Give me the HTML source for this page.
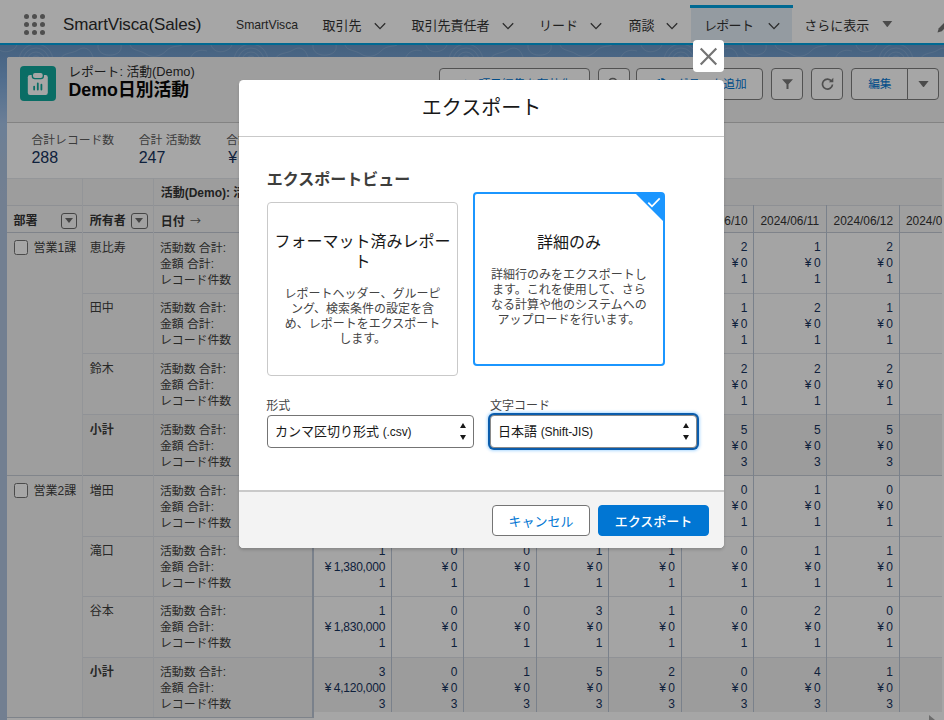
<!DOCTYPE html>
<html lang="ja">
<head>
<meta charset="utf-8">
<title>Demo日別活動 | Salesforce</title>
<style>
*{box-sizing:border-box;margin:0;padding:0}
html,body{width:944px;height:720px;overflow:hidden}
body{position:relative;font-family:"Liberation Sans","Noto Sans CJK JP",sans-serif;font-size:13px;color:#181818;background:#b0c4df}
.abs{position:absolute}
/* ---------- page background ---------- */
#bg{left:0;top:45px;width:944px;height:675px;background:linear-gradient(180deg,rgb(106,150,196) 0px,rgb(114,157,204) 12px,rgb(126,169,218) 35px,rgb(165,195,232) 79px,rgb(172,195,225) 115px,#b0c4df 160px,#b0c4df 100%)}
#bgpat{left:0;top:45px}
/* ---------- nav ---------- */
#nav{left:0;top:0;width:944px;height:45.1px;background:#fff;border-bottom:2.6px solid #00a1e0}
#nav .t{position:absolute;top:0;height:42px;line-height:51px;font-size:13px;color:#333;white-space:nowrap}
#nav .app{font-size:17px;left:63px;line-height:49px;color:#2b2b2b;letter-spacing:-.12px}
#nav svg.chev{position:absolute;top:22px;width:12px;height:8px;fill:none;stroke:#444;stroke-width:1.3}
#tab{left:691px;top:8px;width:101px;height:34px;background:#e3eef8}
#tabbar{left:690px;top:5px;width:103px;height:3px;background:#00a1e0}
.dots{left:24px;top:14px;width:22px;height:22px}
.dots i{position:absolute;width:5px;height:5px;border-radius:50%;background:#7a7a7a}
/* ---------- page header card ---------- */
#card{left:7.2px;top:57.3px;width:960px;height:680px;background:#fff;border-radius:2.5px 0 0 0;overflow:hidden}
#hdr{left:0;top:0;width:960px;height:65.5px;background:#f3f3f3;border-bottom:1px solid #c9c9c9}
#icon{left:13px;top:8.6px;width:36px;height:35.5px;border-radius:4px;background:#10a89b}
#crumb{left:61px;top:6px;font-size:12.8px;line-height:18px;color:#2b2b2b;white-space:nowrap}
#title{left:61.3px;top:21px;font-size:17.8px;line-height:24px;font-weight:700;color:#080707;white-space:nowrap}
.btn{position:absolute;top:10.7px;height:31.9px;border:1.25px solid #7e7e7e;border-radius:4px;background:#fff;color:#0176d3;font-size:11.7px;line-height:30px;text-align:center;white-space:nowrap}
.btn svg{position:absolute;left:50%;top:50%}
/* summary */
#sum{left:0;top:65.5px;width:960px;height:57px;background:#fff}
#sum .l{position:absolute;top:9.5px;font-size:11.8px;line-height:16px;color:#5c5c5c;white-space:nowrap}
#sum .v{position:absolute;top:25px;font-size:16px;line-height:20px;color:#16325c;white-space:nowrap}
/* ---------- table ---------- */
#tbl{left:0;top:121px;width:960px;height:560px;background:#fcfcfc;font-size:12px;color:#16325c}
.hrow{position:absolute;left:0;width:960px}
.subbg{position:absolute;width:900px}
.lbg{position:absolute;background:#f3f3f3}
.vl{position:absolute;width:1px;background:#e2e5ea}
.vl.dk{width:1.2px;background:#bcc6d6}
.hl{position:absolute;height:1px;background:#dde0e6}
.ht{position:absolute;line-height:16px;color:#333;white-space:nowrap}
.ht.dc{text-align:left;padding-left:6.8px;overflow:hidden;font-size:11.9px}
.ar{font-family:"Noto Sans CJK JP",sans-serif;font-weight:400;font-size:11px;position:relative;top:-.5px;margin-left:2px;color:#5c5c5c}
.gt,.own,.lab{position:absolute;line-height:16px;color:#3e3e3c;white-space:nowrap}
.lab{font-size:11.9px}
.c{position:absolute;font-size:12px;letter-spacing:-.22px;line-height:16px;text-align:right;padding-right:6.4px;white-space:nowrap;color:#16325c}
.y{padding-right:2.6px}
.b{font-weight:700}
.fbtn{position:absolute;width:16.2px;height:16.2px;border:1px solid #6b6b6b;border-radius:3px;background:#f8f8f8}
.fbtn:after{content:"";position:absolute;left:3.1px;top:4.6px;border:4px solid transparent;border-top:5px solid #6b6b6b;border-bottom:0}
.cb{position:absolute;width:14.6px;height:14.6px;border:1px solid #747474;border-radius:2.5px;background:#fff}
.sb{position:absolute;width:960px;height:12px;background:#fff}
.sba{position:absolute;left:921.8px;width:0;height:0;border:5px solid transparent;border-left:6.3px solid #a6a6a6;border-right:0}
.redge{position:absolute;top:0;width:12px;height:560px;background:#fff}
/* ---------- overlay & modal ---------- */
#ov{left:0;top:0;width:944px;height:720px;background:rgba(0,0,0,.35)}
#close{left:692.5px;top:39.8px;width:31.7px;height:32px;background:#fff;border-radius:4px}
#modal{left:238.5px;top:79.6px;width:485.6px;height:468.2px;background:#fff;border-radius:4.5px;overflow:hidden;box-shadow:0 2px 3px rgba(0,0,0,.16)}
#mh{left:0;top:0;width:486px;height:57.7px;border-bottom:1.4px solid #c9c9c9;text-align:center;font-size:20px;line-height:56.6px;color:#181818}
#mf{left:0;top:410.9px;width:486px;height:58px;border-top:2px solid #c9c9c9;background:#f3f3f3}
.opt{position:absolute;width:191.3px;height:173.5px;border:1px solid #c9c9c9;border-radius:4px;background:#fff;text-align:center}
.opt h3{position:absolute;left:0;width:100%;font-size:16px;font-weight:400;line-height:20px;color:#181818}
.opt p{position:absolute;left:0;width:100%;padding:0 16px;font-size:12px;line-height:15px;color:#444}
.mhd{position:absolute;font-size:16px;font-weight:700;line-height:22px;color:#3e3e3c;white-space:nowrap}
.opt.on{border:2px solid #1b96ff;border-radius:4px}
.opt.on h3{margin-left:0}.opt.on p{padding:0 15px}
.tri{position:absolute;right:-1px;top:-1px;width:0;height:0;border-top:29px solid #1b96ff;border-left:29px solid transparent;border-top-right-radius:3px}
.ck{position:absolute;right:1.8px;top:2.6px;width:14px;height:11px}
.mb{position:absolute;top:12.1px;height:31.700px;border:1px solid #747474;border-radius:4px;background:#fff;color:#0176d3;font-size:13px;line-height:31.5px;text-align:center;white-space:nowrap}
.mb.pri{background:#0176d3;border-color:#0176d3;color:#fff;font-weight:500}
.sel.foc{border-color:#8a8a8a;box-shadow:0 0 0 2px #0b5cab,0 0 3px 2.500px rgba(27,150,255,.35)}
.lbl{position:absolute;font-size:12px;line-height:16px;color:#444;white-space:nowrap}
.sel{position:absolute;height:32.6px;width:207px;border:1px solid #747474;border-radius:4px;background:#fff;font-size:13px;line-height:31px;padding-left:7.6px;color:#181818;white-space:nowrap}
.sel span{font-size:12px;letter-spacing:-.1px}
.sel i{position:absolute;right:6.8px;border:3px solid transparent}
.sel i.u{top:7.5px;border-bottom:5.2px solid #181818;border-top:0}
.sel i.d{top:19px;border-top:5.2px solid #181818;border-bottom:0}
</style>
</head>
<body>
<div id="bg" class="abs"></div>
<svg id="bgpat" class="abs" width="944" height="14" viewBox="0 0 944 14">
  <defs><pattern id="topo" x="-6" y="0" width="215" height="14" patternUnits="userSpaceOnUse">
    <g fill="none" stroke="#fff" stroke-opacity=".17" stroke-width=".8">
      <circle cx="42" cy="16" r="5"/><circle cx="42" cy="16" r="9"/><circle cx="42" cy="16" r="13"/><circle cx="42" cy="16" r="17"/>
      <path d="M66 14C70 7 78 9 84 5S96 3 99 12"/>
      <path d="M104 0C103 7 110 11 118 10S128 4 127 0"/>
      <path d="M136 0C138 6 146 5 152 9S166 12 172 6S184 2 188 0"/>
      <path d="M196 14C199 6 206 4 213 6"/>
      <path d="M2 0C4 6 10 8 16 6S22 1 23 0"/>
    </g>
  </pattern></defs>
  <rect width="944" height="14" fill="url(#topo)"/>
</svg>

<!-- NAV -->
<div id="nav" class="abs">
  <div class="abs dots">
    <i style="left:0;top:0"></i><i style="left:8.2px;top:0"></i><i style="left:16.4px;top:0"></i>
    <i style="left:0;top:8.2px"></i><i style="left:8.2px;top:8.2px"></i><i style="left:16.4px;top:8.2px"></i>
    <i style="left:0;top:16.4px"></i><i style="left:8.2px;top:16.4px"></i><i style="left:16.4px;top:16.4px"></i>
  </div>
  <div class="t app">SmartVisca(Sales)</div>
  <div class="t" style="left:236px;font-size:12.2px">SmartVisca</div>
  <div class="t" style="left:322.5px">取引先</div>
  <svg class="chev" style="left:374px" viewBox="0 0 12 8"><path d="M0.8 1.2 L6 6.6 L11.2 1.2"/></svg>
  <div class="t" style="left:411.5px">取引先責任者</div>
  <svg class="chev" style="left:501.5px" viewBox="0 0 12 8"><path d="M0.8 1.2 L6 6.6 L11.2 1.2"/></svg>
  <div class="t" style="left:539px">リード</div>
  <svg class="chev" style="left:590px" viewBox="0 0 12 8"><path d="M0.8 1.2 L6 6.6 L11.2 1.2"/></svg>
  <div class="t" style="left:628.5px">商談</div>
  <svg class="chev" style="left:666px" viewBox="0 0 12 8"><path d="M0.8 1.2 L6 6.6 L11.2 1.2"/></svg>
  <div id="tab" class="abs"></div>
  <div id="tabbar" class="abs"></div>
  <div class="t" style="left:704px;letter-spacing:-.7px">レポート</div>
  <svg class="chev" style="left:768px" viewBox="0 0 12 8"><path d="M0.8 1.2 L6 6.6 L11.2 1.2"/></svg>
  <div class="t" style="left:804.3px">さらに表示</div>
  <svg class="abs" style="left:882.300px;top:20.800px;width:10.600px;height:6.300px" viewBox="0 0 11 7"><path d="M0 0H11L5.500 7Z" fill="#747474"/></svg>
  <svg class="abs" style="left:936.500px;top:18.500px;width:14px;height:14px" viewBox="0 0 14 14"><path d="M0.500 13.500L1.800 9.200L10 1L13 4L4.800 12.200Z" fill="#747474"/></svg>
</div>

<!-- PAGE CARD -->
<div id="card" class="abs">
  <div id="hdr" class="abs">
    <div id="icon" class="abs">
      <svg class="abs" style="left:0;top:0;width:36px;height:35.5px" viewBox="0 0 36 35.5">
        <rect x="7.800" y="9" width="20" height="19.900" rx="2.200" fill="#fff"/>
        <rect x="11.700" y="5.700" width="12.300" height="7.600" rx="3.200" fill="#10a89b"/>
        <rect x="13" y="7" width="9.700" height="5" rx="2" fill="#fff"/>
        <path d="M14.150 20.600V23.600M17.800 17.300V23.600M21.400 18.700V23.600" stroke="#10a89b" stroke-width="1.800" stroke-linecap="round" fill="none"/>
      </svg>
    </div>
    <div id="crumb" class="abs">レポート: 活動(Demo)</div>
    <div id="title" class="abs">Demo日別活動</div>
    <div class="btn" style="left:431.5px;width:151px;padding-left:22px"><svg style="left:17.5px;top:9px;margin:0;width:13px;height:13px" viewBox="0 0 13 13"><path d="M0.500 12.500L1.300 9L8.800 1.500L11.500 4.200L4 11.700Z" fill="#0176d3"/></svg>項目編集を有効化</div>
    <div class="btn" style="left:590.5px;width:32px"><svg style="margin:-7px 0 0 -7px;width:14px;height:14px" viewBox="0 0 14 14"><circle cx="5.800" cy="5.800" r="4.300" fill="none" stroke="#747474" stroke-width="1.600"/><path d="M9 9L13 13" stroke="#747474" stroke-width="1.800"/></svg></div>
    <div class="btn" style="left:629px;width:127px;padding-left:24px"><svg style="left:17px;top:9px;margin:0;width:13px;height:13px" viewBox="0 0 13 13"><path d="M6 1A5.600 5.600 0 1 0 12 7H6Z" fill="#0176d3"/><path d="M7.300 0V5.700H13A5.700 5.700 0 0 0 7.300 0Z" fill="#0176d3"/></svg>グラフを追加</div>
    <div class="btn" style="left:764.3px;width:31.700px"><svg style="margin:-5.200px 0 0 -5.500px;width:11px;height:10.200px" viewBox="0 0 12 11"><path d="M0 0.300H12L7.100 5.800V11H4.900V5.800Z" fill="#7a7a7a"/></svg></div>
    <div class="btn" style="left:804px;width:31.700px"><svg style="margin:-6.500px 0 0 -6.500px;width:13px;height:13px" viewBox="0 0 13 13"><path d="M10.600 4.200A5 5 0 1 0 11.500 7.500" fill="none" stroke="#7a7a7a" stroke-width="1.700"/><path d="M12.300 0.800V5.300H7.800Z" fill="#7a7a7a"/></svg></div>
    <div class="btn" style="left:844.2px;width:57px;border-radius:4px 0 0 4px">編集</div>
    <div class="btn" style="left:900.2px;width:31.500px;border-radius:0 4px 4px 0"><svg style="margin:-3px 0 0 -5.500px;width:11px;height:6.500px" viewBox="0 0 11 7"><path d="M0 0H11L5.500 7Z" fill="#747474"/></svg></div>
  </div>
  <div id="sum" class="abs">
    <div class="l" style="left:24.300px">合計レコード数</div><div class="v" style="left:24.200px">288</div>
    <div class="l" style="left:131.600px">合計 活動数</div><div class="v" style="left:131.500px">247</div>
    <div class="l" style="left:219px">合計 金額</div><div class="v" style="left:221px">¥ 9,130,000</div>
  </div>
  <div id="tbl" class="abs">
    <div class="lbg" style="left:0;top:0;width:305.3px;height:539.6px"></div>
    <div class="hrow" style="top:0;height:26.9px;background:#f1f1f1;border-top:1px solid #e3e6eb"></div>
    <div class="hrow" style="top:26.9px;height:27.3px;left:305.3px;background:#f5f5f5"></div>
    <div class="subbg" style="left:75.4px;top:236.45px;height:60.75px;background:#efefef"></div>
    <div class="subbg" style="left:305.3px;top:236.45px;height:60.75px;background:#f0f0f0"></div>
    <div class="subbg" style="left:75.4px;top:479.45px;height:60.75px;background:#efefef"></div>
    <div class="subbg" style="left:305.3px;top:479.45px;height:60.75px;background:#f0f0f0"></div>
    <div class="ht b" style="left:153.5px;top:7.2px">活動(Demo): 活動日</div>
    <div class="ht b" style="left:6.2px;top:34.3px">部署</div>
    <div class="fbtn" style="left:53.6px;top:34.3px"></div>
    <div class="ht b" style="left:82.6px;top:34.3px">所有者</div>
    <div class="fbtn" style="left:124.2px;top:34.3px"></div>
    <div class="ht b" style="left:153.5px;top:34.3px">日付 <span class="ar">→</span></div>
    <div class="ht dc" style="left:305.3px;width:79px;top:34.3px">2024/06/03</div>
    <div class="ht dc" style="left:384.3px;width:72.2px;top:34.3px">2024/06/04</div>
    <div class="ht dc" style="left:456.5px;width:72.5px;top:34.3px">2024/06/05</div>
    <div class="ht dc" style="left:529px;width:72.5px;top:34.3px">2024/06/06</div>
    <div class="ht dc" style="left:601.5px;width:72.5px;top:34.3px">2024/06/07</div>
    <div class="ht dc" style="left:674px;width:72.5px;top:34.3px">2024/06/10</div>
    <div class="ht dc" style="left:746.5px;width:73.1px;top:34.3px">2024/06/11</div>
    <div class="ht dc" style="left:819.6px;width:72.4px;top:34.3px">2024/06/12</div>
    <div class="ht dc" style="left:892px;width:72.5px;top:34.3px">2024/06/13</div>
    <div class="hl" style="left:0;width:960px;top:26.4px;background:#dadde3"></div>
    <div class="hl" style="left:0;width:960px;top:53.3px;height:1.6px;background:#c3cad5"></div>
    <div class="hl" style="left:75.4px;width:960px;top:114.45px"></div>
    <div class="hl" style="left:75.4px;width:960px;top:175.2px"></div>
    <div class="hl" style="left:75.4px;width:960px;top:235.95px"></div>
    <div class="hl" style="left:0px;width:960px;top:296.7px;height:1.4px;background:#c6ccd6"></div>
    <div class="hl" style="left:75.4px;width:960px;top:357.45px"></div>
    <div class="hl" style="left:75.4px;width:960px;top:418.2px"></div>
    <div class="hl" style="left:75.4px;width:960px;top:478.95px"></div>
    <div class="vl" style="left:74.9px;top:0;height:539.6px"></div>
    <div class="vl" style="left:145.6px;top:0;height:539.6px"></div>
    <div class="hl" style="left:0;width:305.3px;top:539.2px;height:1px;background:#c2c9d4"></div>
    <div class="vl dk" style="left:304.7px;top:26.9px;height:512.7px;width:1.8px"></div>
    <div class="vl dk" style="left:383.7px;top:26.9px;height:507px"></div>
    <div class="vl dk" style="left:455.9px;top:26.9px;height:507px"></div>
    <div class="vl dk" style="left:528.4px;top:26.9px;height:507px"></div>
    <div class="vl dk" style="left:600.9px;top:26.9px;height:507px"></div>
    <div class="vl dk" style="left:673.4px;top:26.9px;height:507px"></div>
    <div class="vl dk" style="left:745.9px;top:26.9px;height:507px"></div>
    <div class="vl dk" style="left:819px;top:26.9px;height:507px"></div>
    <div class="vl dk" style="left:891.4px;top:26.9px;height:507px"></div>
    <div class="cb" style="left:6.4px;top:61.8px"></div>
    <div class="gt" style="left:26.4px;top:61.4px">営業1課</div>
    <div class="cb" style="left:6.4px;top:304.8px"></div>
    <div class="gt" style="left:26.4px;top:304.4px">営業2課</div>
    <div class="own" style="left:82.6px;top:61.4px">恵比寿</div>
    <div class="lab" style="left:152.7px;top:61.4px">活動数 合計:<br>金額 合計:<br>レコード件数</div>
    <div class="c" style="left:305.3px;width:79px;top:61.1px">2<br><span class="y">¥</span>0<br>1</div>
    <div class="c" style="left:384.3px;width:72.2px;top:61.1px">1<br><span class="y">¥</span>0<br>1</div>
    <div class="c" style="left:456.5px;width:72.5px;top:61.1px">1<br><span class="y">¥</span>0<br>1</div>
    <div class="c" style="left:529px;width:72.5px;top:61.1px">2<br><span class="y">¥</span>0<br>1</div>
    <div class="c" style="left:601.5px;width:72.5px;top:61.1px">1<br><span class="y">¥</span>0<br>1</div>
    <div class="c" style="left:674px;width:72.5px;top:61.1px">2<br><span class="y">¥</span>0<br>1</div>
    <div class="c" style="left:746.5px;width:73.1px;top:61.1px">1<br><span class="y">¥</span>0<br>1</div>
    <div class="c" style="left:819.6px;width:72.4px;top:61.1px">2<br><span class="y">¥</span>0<br>1</div>
    <div class="own" style="left:82.6px;top:122.15px">田中</div>
    <div class="lab" style="left:152.7px;top:122.15px">活動数 合計:<br>金額 合計:<br>レコード件数</div>
    <div class="c" style="left:305.3px;width:79px;top:121.85px">1<br><span class="y">¥</span>0<br>1</div>
    <div class="c" style="left:384.3px;width:72.2px;top:121.85px">2<br><span class="y">¥</span>0<br>1</div>
    <div class="c" style="left:456.5px;width:72.5px;top:121.85px">1<br><span class="y">¥</span>0<br>1</div>
    <div class="c" style="left:529px;width:72.5px;top:121.85px">1<br><span class="y">¥</span>0<br>1</div>
    <div class="c" style="left:601.5px;width:72.5px;top:121.85px">2<br><span class="y">¥</span>0<br>1</div>
    <div class="c" style="left:674px;width:72.5px;top:121.85px">1<br><span class="y">¥</span>0<br>1</div>
    <div class="c" style="left:746.5px;width:73.1px;top:121.85px">2<br><span class="y">¥</span>0<br>1</div>
    <div class="c" style="left:819.6px;width:72.4px;top:121.85px">1<br><span class="y">¥</span>0<br>1</div>
    <div class="own" style="left:82.6px;top:182.9px">鈴木</div>
    <div class="lab" style="left:152.7px;top:182.9px">活動数 合計:<br>金額 合計:<br>レコード件数</div>
    <div class="c" style="left:305.3px;width:79px;top:182.6px">2<br><span class="y">¥</span>1,920,000<br>1</div>
    <div class="c" style="left:384.3px;width:72.2px;top:182.6px">1<br><span class="y">¥</span>0<br>1</div>
    <div class="c" style="left:456.5px;width:72.5px;top:182.6px">2<br><span class="y">¥</span>0<br>1</div>
    <div class="c" style="left:529px;width:72.5px;top:182.6px">2<br><span class="y">¥</span>0<br>1</div>
    <div class="c" style="left:601.5px;width:72.5px;top:182.6px">1<br><span class="y">¥</span>0<br>1</div>
    <div class="c" style="left:674px;width:72.5px;top:182.6px">2<br><span class="y">¥</span>0<br>1</div>
    <div class="c" style="left:746.5px;width:73.1px;top:182.6px">2<br><span class="y">¥</span>0<br>1</div>
    <div class="c" style="left:819.6px;width:72.4px;top:182.6px">2<br><span class="y">¥</span>0<br>1</div>
    <div class="own b" style="left:82.6px;top:243.65px">小計</div>
    <div class="lab" style="left:152.7px;top:243.65px">活動数 合計:<br>金額 合計:<br>レコード件数</div>
    <div class="c" style="left:305.3px;width:79px;top:243.35px">5<br><span class="y">¥</span>1,920,000<br>3</div>
    <div class="c" style="left:384.3px;width:72.2px;top:243.35px">4<br><span class="y">¥</span>0<br>3</div>
    <div class="c" style="left:456.5px;width:72.5px;top:243.35px">4<br><span class="y">¥</span>0<br>3</div>
    <div class="c" style="left:529px;width:72.5px;top:243.35px">5<br><span class="y">¥</span>0<br>3</div>
    <div class="c" style="left:601.5px;width:72.5px;top:243.35px">4<br><span class="y">¥</span>0<br>3</div>
    <div class="c" style="left:674px;width:72.5px;top:243.35px">5<br><span class="y">¥</span>0<br>3</div>
    <div class="c" style="left:746.5px;width:73.1px;top:243.35px">5<br><span class="y">¥</span>0<br>3</div>
    <div class="c" style="left:819.6px;width:72.4px;top:243.35px">5<br><span class="y">¥</span>0<br>3</div>
    <div class="own" style="left:82.6px;top:304.4px">増田</div>
    <div class="lab" style="left:152.7px;top:304.4px">活動数 合計:<br>金額 合計:<br>レコード件数</div>
    <div class="c" style="left:305.3px;width:79px;top:304.1px">1<br><span class="y">¥</span>910,000<br>1</div>
    <div class="c" style="left:384.3px;width:72.2px;top:304.1px">0<br><span class="y">¥</span>0<br>1</div>
    <div class="c" style="left:456.5px;width:72.5px;top:304.1px">1<br><span class="y">¥</span>0<br>1</div>
    <div class="c" style="left:529px;width:72.5px;top:304.1px">1<br><span class="y">¥</span>0<br>1</div>
    <div class="c" style="left:601.5px;width:72.5px;top:304.1px">0<br><span class="y">¥</span>0<br>1</div>
    <div class="c" style="left:674px;width:72.5px;top:304.1px">0<br><span class="y">¥</span>0<br>1</div>
    <div class="c" style="left:746.5px;width:73.1px;top:304.1px">1<br><span class="y">¥</span>0<br>1</div>
    <div class="c" style="left:819.6px;width:72.4px;top:304.1px">0<br><span class="y">¥</span>0<br>1</div>
    <div class="own" style="left:82.6px;top:365.15px">滝口</div>
    <div class="lab" style="left:152.7px;top:365.15px">活動数 合計:<br>金額 合計:<br>レコード件数</div>
    <div class="c" style="left:305.3px;width:79px;top:364.85px">1<br><span class="y">¥</span>1,380,000<br>1</div>
    <div class="c" style="left:384.3px;width:72.2px;top:364.85px">0<br><span class="y">¥</span>0<br>1</div>
    <div class="c" style="left:456.5px;width:72.5px;top:364.85px">0<br><span class="y">¥</span>0<br>1</div>
    <div class="c" style="left:529px;width:72.5px;top:364.85px">1<br><span class="y">¥</span>0<br>1</div>
    <div class="c" style="left:601.5px;width:72.5px;top:364.85px">1<br><span class="y">¥</span>0<br>1</div>
    <div class="c" style="left:674px;width:72.5px;top:364.85px">0<br><span class="y">¥</span>0<br>1</div>
    <div class="c" style="left:746.5px;width:73.1px;top:364.85px">1<br><span class="y">¥</span>0<br>1</div>
    <div class="c" style="left:819.6px;width:72.4px;top:364.85px">1<br><span class="y">¥</span>0<br>1</div>
    <div class="own" style="left:82.6px;top:424.9px">谷本</div>
    <div class="lab" style="left:152.7px;top:424.9px">活動数 合計:<br>金額 合計:<br>レコード件数</div>
    <div class="c" style="left:305.3px;width:79px;top:424.6px">1<br><span class="y">¥</span>1,830,000<br>1</div>
    <div class="c" style="left:384.3px;width:72.2px;top:424.6px">0<br><span class="y">¥</span>0<br>1</div>
    <div class="c" style="left:456.5px;width:72.5px;top:424.6px">0<br><span class="y">¥</span>0<br>1</div>
    <div class="c" style="left:529px;width:72.5px;top:424.6px">3<br><span class="y">¥</span>0<br>1</div>
    <div class="c" style="left:601.5px;width:72.5px;top:424.6px">1<br><span class="y">¥</span>0<br>1</div>
    <div class="c" style="left:674px;width:72.5px;top:424.6px">0<br><span class="y">¥</span>0<br>1</div>
    <div class="c" style="left:746.5px;width:73.1px;top:424.6px">2<br><span class="y">¥</span>0<br>1</div>
    <div class="c" style="left:819.6px;width:72.4px;top:424.6px">0<br><span class="y">¥</span>0<br>1</div>
    <div class="own b" style="left:82.6px;top:485.65px">小計</div>
    <div class="lab" style="left:152.7px;top:485.65px">活動数 合計:<br>金額 合計:<br>レコード件数</div>
    <div class="c" style="left:305.3px;width:79px;top:485.35px">3<br><span class="y">¥</span>4,120,000<br>3</div>
    <div class="c" style="left:384.3px;width:72.2px;top:485.35px">0<br><span class="y">¥</span>0<br>3</div>
    <div class="c" style="left:456.5px;width:72.5px;top:485.35px">1<br><span class="y">¥</span>0<br>3</div>
    <div class="c" style="left:529px;width:72.5px;top:485.35px">5<br><span class="y">¥</span>0<br>3</div>
    <div class="c" style="left:601.5px;width:72.5px;top:485.35px">2<br><span class="y">¥</span>0<br>3</div>
    <div class="c" style="left:674px;width:72.5px;top:485.35px">0<br><span class="y">¥</span>0<br>3</div>
    <div class="c" style="left:746.5px;width:73.1px;top:485.35px">4<br><span class="y">¥</span>0<br>3</div>
    <div class="c" style="left:819.6px;width:72.4px;top:485.35px">1<br><span class="y">¥</span>0<br>3</div>
    <div class="sb" style="left:306.5px;top:533.9px"></div>
    <div class="sba" style="top:536.9px"></div>
    <div class="redge" style="left:934.9px"></div>
  </div>
</div>

<!-- OVERLAY -->
<div id="ov" class="abs"></div>

<!-- CLOSE -->
<div id="close" class="abs"><svg class="abs" style="left:6.200px;top:6.800px;width:19px;height:19px" viewBox="0 0 20 20"><path d="M1.800 1.600L18.200 18.400M18.200 1.600L1.800 18.400" stroke="#747474" stroke-width="2.300" fill="none"/></svg></div>

<!-- MODAL -->
<div id="modal" class="abs">
  <div id="mh" class="abs">エクスポート</div>
  <div class="mhd" style="left:28.2px;top:89.3px">エクスポートビュー</div>
  <div class="opt" style="left:28.4px;top:122.6px"><h3 style="top:29px">フォーマット済みレポート</h3><p style="top:84px">レポートヘッダー、グルーピング、検索条件の設定を含め、レポートをエクスポートします。</p></div>
  <div class="opt on" style="left:234.8px;top:112.6px;height:174px"><h3 style="top:38.5px">詳細のみ</h3><p style="top:73.8px">詳細行のみをエクスポートします。これを使用して、さらなる計算や他のシステムへのアップロードを行います。</p><div class="tri"></div><svg class="ck" viewBox="0 0 14 11"><path d="M1.3 5.6L5 9.3L12.700 1.400" fill="none" stroke="#fff" stroke-width="1.700"/></svg></div>
  <div class="lbl" style="left:27.8px;top:318.2px">形式</div>
  <div class="sel" style="left:28px;top:335.4px">カンマ区切り形式 <span>(.csv)</span><i class="u"></i><i class="d"></i></div>
  <div class="lbl" style="left:251.5px;top:318.2px">文字コード</div>
  <div class="sel foc" style="left:251px;top:335.4px">日本語 <span>(Shift-JIS)</span><i class="u"></i><i class="d"></i></div>
  <div id="mf" class="abs"><div class="mb" style="left:253.5px;width:98px">キャンセル</div><div class="mb pri" style="left:359.3px;width:111.300px">エクスポート</div></div>
</div>
</body>
</html>
